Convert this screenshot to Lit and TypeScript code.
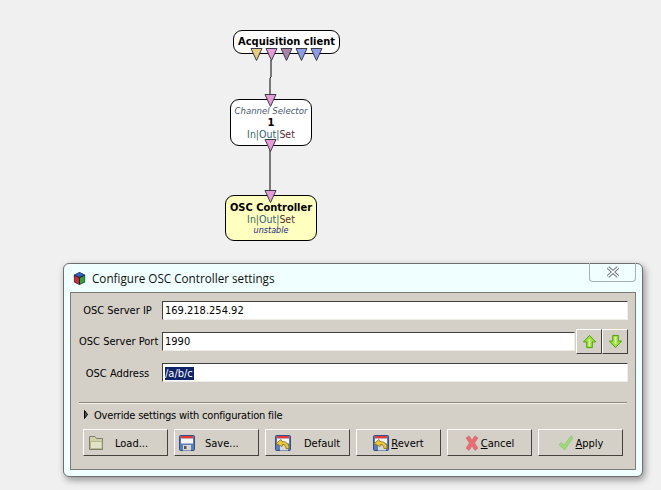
import { LitElement, html, css, svg } from "lit";
import { customElement } from "lit/decorators.js";

const tri = (x: number, y: number, fill: string) =>
  svg`<path d="M${x - 5.5} ${y}H${x + 5.5}L${x} ${y + 12}Z" fill="${fill}" stroke="#3c3c46" stroke-width="1"/>`;

const folder = html`<svg class="ic" viewBox="0 0 16 16" width="16" height="16"><path d="M1.500 1.500h5.500l1.500 2H14.500v11H1.500z" fill="#cfd2a8" stroke="#7f8068"/><path d="M2.500 6.500h11.500v7H2.500z" fill="#e0e3c4" stroke="#a9ab8c" stroke-width=".7"/></svg>`;
const floppy = html`<svg class="ic" viewBox="0 0 16 16" width="16" height="16"><rect x=".5" y=".5" width="15" height="15" rx="1" fill="#5a7db5" stroke="#2f4f86"/><rect x="2" y="1" width="12" height="2.500" fill="#e23a3a"/><rect x="2" y="3.500" width="12" height="5" fill="#f5f5f5"/><rect x="4" y="10" width="8" height="5.500" fill="#d8d8d8"/><rect x="5" y="11" width="2.500" height="3" fill="#555"/></svg>`;
const revert = html`<svg class="ic" viewBox="0 0 16 16" width="16" height="16"><rect x=".5" y=".5" width="15" height="15" rx="1" fill="#5a7db5" stroke="#2f4f86"/><rect x="2" y="1" width="12" height="2.500" fill="#e23a3a"/><rect x="2" y="3.500" width="12" height="5" fill="#f5f5f5"/><rect x="5" y="10" width="8" height="5.500" fill="#d8d8d8"/><path d="M1 8.500 6 4.500l1 2c4 0 7 2 7 7H11c0-2.500-1-4-3.500-4l-.5 2z" fill="#eac93c" stroke="#8a6a10" stroke-width=".8"/></svg>`;
const cross = html`<svg class="ic" viewBox="0 0 14 16" width="14" height="16"><path d="M1 3 4 .8l3 4.200 3-4.200 3 2.200-3.500 5 3.500 5-3 2.500-3-4.500-3 4.500-3-2.500 3.500-5z" fill="#ea6c70" stroke="#c6767a" stroke-width=".7"/></svg>`;
const check = html`<svg class="ic" viewBox="0 0 16 16" width="16" height="16"><path d="M1 9.500 3.500 7.500l2.500 3L13 .8l2 1.700L6.500 15z" fill="#9ade6e" stroke="#8dbb80" stroke-width=".7"/></svg>`;
const up = html`<svg viewBox="0 0 16 16" width="15" height="15"><path d="M8 1.500 14.500 8.500H11V14.500H5V8.500H1.500z" fill="#9fe044" stroke="#4c9c06"/><path d="M7 5.500H9V13H7z" fill="#d6f5a0"/></svg>`;
const down = html`<svg viewBox="0 0 16 16" width="15" height="15"><path d="M8 14.500 14.500 7.500H11V1.500H5V7.500H1.500z" fill="#9fe044" stroke="#4c9c06"/><path d="M7 3H9V10.500H7z" fill="#d6f5a0"/></svg>`;
const io = html`<span class="io"><i>In|</i><b>Out|</b><em>Set</em></span>`;

@customElement("app-root")
export class AppRoot extends LitElement {
  static styles = css`
    :host { display: block; position: relative; width: 661px; height: 490px; overflow: hidden; background: #f0f0f0; font-family: "DejaVu Sans Condensed", "DejaVu Sans", sans-serif; font-size: 11px; color: #000; }
    .wires { position: absolute; left: 0; top: 0; z-index: 2; }
    .node { position: absolute; box-sizing: border-box; border: 1px solid #000; border-radius: 9px; background: #fff; display: flex; flex-direction: column; align-items: center; justify-content: center; line-height: 11px; white-space: nowrap; }
    .n1 { left: 233px; top: 30px; width: 107px; height: 24px; font-weight: bold; padding-bottom: 1px; }
    .n2 { left: 230px; top: 99px; width: 82px; height: 47px; }
    .n3 { left: 225px; top: 195px; width: 92px; height: 46px; background: #ffffc0; }
    .it { font-style: italic; color: #4a5a70; font-size: 9.5px; }
    .b { font-weight: bold; line-height: 13px; }
    .io { font-size: 10.5px; }
    .io i { font-style: normal; color: #3d6b5e; }
    .io b { font-weight: normal; color: #2f5f78; }
    .io em { font-style: normal; color: #5a2a30; }
    .unst { font-style: italic; color: #1c2a7a; font-size: 9px; }

    .win { position: absolute; left: 63px; top: 263px; width: 580px; height: 214px; box-sizing: border-box; background: #f0ffff; border: 1px solid #6e6e6e; border-radius: 6px; box-shadow: 2px 3px 7px rgba(0,0,0,.4); padding: 0 6px 6px 6px; display: flex; flex-direction: column; }
    .title { height: 28px; flex: none; display: flex; align-items: center; gap: 5px; font-family: "Open Sans", sans-serif; font-size: 11.7px; color: #111; padding-left: 2px; position: relative; }
    .close { position: absolute; right: 0; top: -1px; width: 47px; height: 19px; box-sizing: border-box; border: 1px solid #a9b0b8; border-top: none; border-radius: 0 0 4px 4px; display: flex; align-items: center; justify-content: center; }
    .panel { flex: 1; background: #d4d0c8; border: 1px solid #7c7c76; padding: 8px 7px 13px 8px; display: flex; flex-direction: column; }
    .row { display: flex; align-items: center; }
    .row + .row { margin-top: 9px; }
    .lab { width: 83px; box-sizing: border-box; padding-right: 6px; flex: none; text-align: center; white-space: nowrap; }
    .inp { flex: 1; height: 19px; box-sizing: border-box; background: #fff; border: 1px solid; border-color: #404040 #efede8 #efede8 #404040; padding-left: 2px; line-height: 17px; display: block; }
    .addr { line-height: 19px; }
    .lab.laddr { padding-top: 2px; }
    .sel { background: #10246a; color: #fff; padding-right: 1px; }
    .spin { display: flex; margin-left: 1px; }
    .sb { width: 26px; height: 25px; box-sizing: border-box; border: 1px solid; border-color: #fff #404040 #404040 #fff; display: flex; align-items: center; justify-content: center; }
    .sep { border-top: 1px solid #8a887f; border-bottom: 1px solid #f2f0ea; margin: 20px 1px 0 0; }
    .ov { display: flex; align-items: center; gap: 6px; margin: 3px 0 0 5px; height: 15px; letter-spacing: -0.2px; }
    .ov span { padding-top: 1px; }
    .btns { display: flex; gap: 6px; margin: 7px 0 0 4px; }
    .btn { width: 85px; height: 27px; box-sizing: border-box; border: 1px solid; border-color: #fff #44423c #44423c #fff; display: flex; align-items: center; justify-content: center; gap: 2px; }
    .btn .ic { flex: none; }
    .btn span { padding-top: 1px; }
    .lft { justify-content: flex-start; padding-left: 4px; }
    .lft span { padding-top: 2px; }
    .g10 { gap: 10px; }
    .g11 { gap: 11px; }
    .g13 { gap: 13px; padding-left: 9px; }
    u { text-underline-offset: 1px; }
  `;

  render() {
    return html`
      <div class="node n1">Acquisition client</div>
      <div class="node n2"><span class="it">Channel Selector</span><span class="b">1</span>${io}</div>
      <div class="node n3"><span class="b">OSC Controller</span>${io}<span class="unst">unstable</span></div>
      <svg class="wires" width="661" height="260" viewBox="0 0 661 260">
        <path d="M271 60V77L270 78V96M270 150V192" fill="none" stroke="#000" stroke-width="1"/>
        ${tri(256.5, 48.5, "#e8cc80")}${tri(271.5, 48.5, "#e69ad8")}${tri(286.5, 48.5, "#a884a8")}${tri(301.5, 48.5, "#8c9ce8")}${tri(316.5, 48.5, "#8c9ce8")}
        ${tri(270.5, 94.5, "#e69ad8")}${tri(270.5, 139.5, "#e69ad8")}${tri(270.5, 190.5, "#e69ad8")}
      </svg>
      <div class="win">
        <div class="title">
          <svg viewBox="0 0 16 16" width="15" height="15"><path d="M8 1 14 4V12L8 15 2 12V4z" fill="#222"/><path d="M8 1.500 13.500 4 8 6.500 2.500 4z" fill="#3060c0"/><path d="M2.500 5 7.500 7.500V14L2.500 11.500z" fill="#c03040"/><path d="M13.500 5V11.500L8.500 14V7.500z" fill="#30a040"/></svg>
          <span>Configure OSC Controller settings</span>
          <div class="close"><svg viewBox="0 0 14 12" width="14" height="12"><path d="M2 1.500 12 10.500M12 1.500 2 10.500" stroke="#6a7078" stroke-width="3.400"/><path d="M2 1.500 12 10.500M12 1.500 2 10.500" stroke="#fff" stroke-width="1.600"/></svg></div>
        </div>
        <div class="panel">
          <div class="row"><span class="lab">OSC Server IP</span><span class="inp">169.218.254.92</span></div>
          <div class="row"><span class="lab">OSC Server Port</span><span class="inp">1990</span><div class="spin"><div class="sb">${up}</div><div class="sb">${down}</div></div></div>
          <div class="row"><span class="lab laddr">OSC Address</span><span class="inp addr"><span class="sel">/a/b/c</span></span></div>
          <div class="sep"></div>
          <div class="ov"><svg width="4" height="9" viewBox="0 0 4 9"><path d="M.5 .5 3.500 4.500 .5 8.500z" fill="#555" stroke="#000" stroke-width="1"/></svg><span>Override settings with configuration file</span></div>
          <div class="btns">
            <div class="btn lft g11">${folder}<span>Load...</span></div>
            <div class="btn lft g10">${floppy}<span>Save...</span></div>
            <div class="btn lft g13">${revert}<span>Default</span></div>
            <div class="btn">${revert}<span><u>R</u>evert</span></div>
            <div class="btn">${cross}<span><u>C</u>ancel</span></div>
            <div class="btn">${check}<span><u>A</u>pply</span></div>
          </div>
        </div>
      </div>
    `;
  }
}
